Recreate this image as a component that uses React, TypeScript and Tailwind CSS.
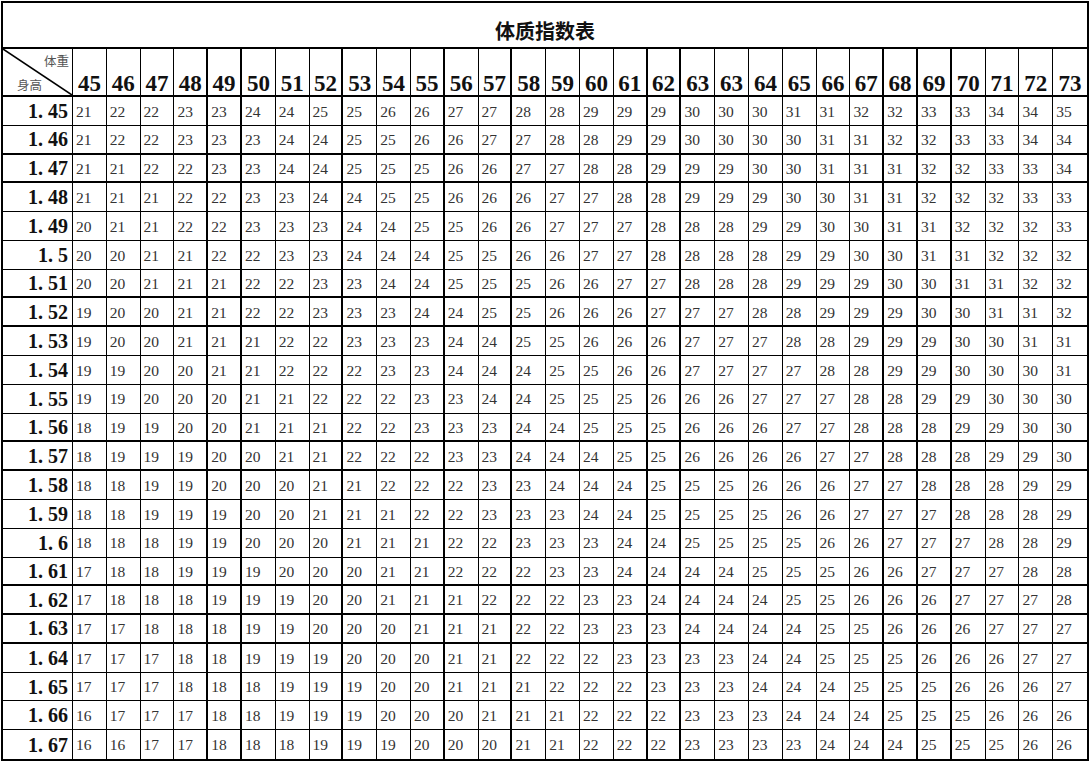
import React from 'react';

const weights = [45, 46, 47, 48, 49, 50, 51, 52, 53, 54, 55, 56, 57, 58, 59, 60, 61, 62, 63, 63, 64, 65, 66, 67, 68, 69, 70, 71, 72, 73];
const heights = ['1.45', '1.46', '1.47', '1.48', '1.49', '1.5', '1.51', '1.52', '1.53', '1.54', '1.55', '1.56', '1.57', '1.58', '1.59', '1.6', '1.61', '1.62', '1.63', '1.64', '1.65', '1.66', '1.67'];

// scanned sheet: some grid lines print heavier than others
const thickCols = [3, 4, 7, 10, 12, 16, 17, 23, 24, 25];
const thickRows = ['1.46', '1.47', '1.51', '1.52', '1.56', '1.57', '1.61', '1.62', '1.63'];

const serif = "font-['Liberation_Serif','Noto_Sans_CJK_SC',serif]";

function RowLabel({ h }: { h: string }) {
  const [a, b] = h.split('.');
  return (
    <span className="leading-none">
      {a}.<span className="ml-[5px]">{b}</span>
    </span>
  );
}

export default function App() {
  return (
    <div className="w-[1090px] h-[762px] bg-white pt-px pl-px">
      <div className="w-[1088px] h-[760px] border-2 border-black flex flex-col">
        <div className="h-[46px] shrink-0 border-b-2 border-black flex items-end justify-center pb-[6px]">
          <span className="font-['Noto_Sans_CJK_SC',sans-serif] font-bold text-[20px] leading-none text-[#111]">体质指数表</span>
        </div>
        <div className="flex-1 grid grid-cols-[70px_repeat(30,minmax(0,1fr))] grid-rows-[48px_repeat(23,minmax(0,1fr))]">
          <div className="relative border-r border-b-2 border-black">
            <svg className="absolute inset-0 w-full h-full" viewBox="0 0 100 100" preserveAspectRatio="none">
              <line x1="0" y1="0" x2="100" y2="100" stroke="#000" strokeWidth="1.6" vectorEffect="non-scaling-stroke" />
            </svg>
            <span className="absolute right-[3px] top-[6px] font-['Noto_Sans_CJK_SC',sans-serif] text-[12.5px] leading-none text-[#555]">体重</span>
            <span className="absolute left-[14px] bottom-[4px] font-['Noto_Sans_CJK_SC',sans-serif] text-[12.5px] leading-none text-[#555]">身高</span>
          </div>
          {weights.map((w, i) => (
            <div
              key={'h' + i}
              className={`${serif} flex items-end justify-center border-b-2 border-black font-bold text-[23px] leading-none text-[#111] ${i === weights.length - 1 ? '' : thickCols.includes(i) ? 'border-r-2' : 'border-r'}`}
            >
              {w}
            </div>
          ))}
          {heights.map((h, r) => {
            const last = r === heights.length - 1;
            const rowB = last ? '' : thickRows.includes(h) ? 'border-b-2' : 'border-b';
            const hv = parseFloat(h);
            return (
              <React.Fragment key={h}>
                <div className={`${serif} flex items-center justify-end pr-[4px] border-r border-black ${rowB} font-bold text-[20px] text-[#111]`}>
                  <RowLabel h={h} />
                </div>
                {weights.map((w, i) => (
                  <div
                    key={i}
                    className={`${serif} flex items-center pl-[3px] pt-px border-black ${rowB} ${i === weights.length - 1 ? '' : thickCols.includes(i) ? 'border-r-2' : 'border-r'} text-[15.5px] leading-none text-[#333]`}
                  >
                    {Math.round(w / (hv * hv))}
                  </div>
                ))}
              </React.Fragment>
            );
          })}
        </div>
      </div>
    </div>
  );
}
